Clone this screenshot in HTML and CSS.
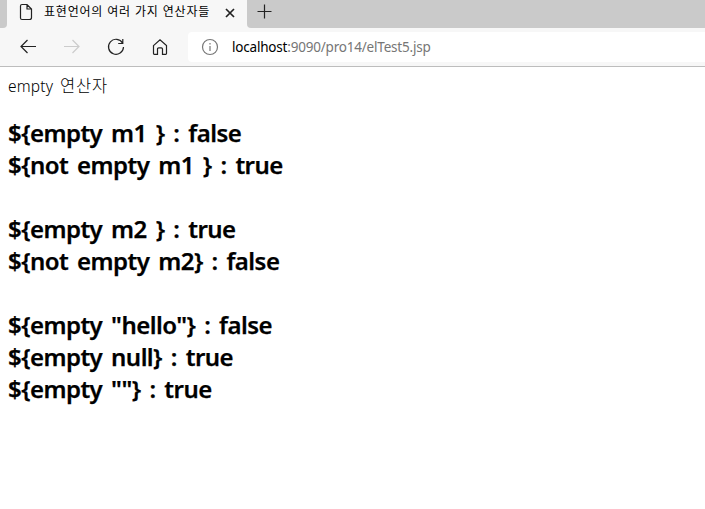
FILE: index.html
```html
<!DOCTYPE html>
<html lang="ko">
<head>
<meta charset="utf-8">
<title>표현언어의 여러 가지 연산자들</title>
<link rel="stylesheet" href="styles.css">
</head>
<body>
<header class="browser">
  <div class="tabs">
    <div class="tab-edge"></div>
    <div class="tab">
      <svg class="file" width="14" height="18" viewBox="0 0 14 18"><path d="M3 1.5H8L12.5 6V14.5Q12.5 16.5 10.5 16.5H3Q1.5 16.5 1.5 15V3Q1.5 1.5 3 1.5ZM8 1.5V6H12.5"/></svg>
      <span class="tab-title">표현언어의 여러 가지 연산자들</span>
      <svg class="close" width="10" height="10" viewBox="0 0 10 10"><path d="M1 1L9 9M9 1L1 9"/></svg>
    </div>
    <div class="tab-rest"><svg width="15" height="15" viewBox="0 0 15 15"><path d="M7.5 .5V14.5M.5 7.5H14.5"/></svg></div>
  </div>
  <nav class="toolbar">
    <svg width="18" height="18" viewBox="0 0 18 18"><path d="M17 8.5H2M8.5 2L2 8.5L8.5 15"/></svg>
    <svg class="disabled" width="18" height="18" viewBox="0 0 18 18"><path d="M1 8.5H16M9.5 2L16 8.5L9.5 15"/></svg>
    <svg width="18" height="18" viewBox="0 0 18 18"><path d="M15.6 5.2A7.5 7.5 0 1 0 16.5 9M15.8 1V5.5H11.2"/></svg>
    <svg width="18" height="18" viewBox="0 0 18 18"><path d="M2.5 7.6L9 1.8L15.5 7.6V15.5Q15.5 16.3 14.7 16.3H11.5V11Q11.5 9.8 10.3 9.8H7.7Q6.5 9.8 6.5 11V16.3H3.3Q2.5 16.3 2.5 15.5Z"/></svg>
    <div class="address">
      <svg class="info" width="18" height="18" viewBox="0 0 18 18"><circle cx="9" cy="9" r="7.5"/><path d="M9 8V13M9 5V6.5"/></svg>
      <span class="url"><b>localhost</b>:9090/pro14/elTest5.jsp</span>
    </div>
  </nav>
</header>
<main>
<p>empty <span class="ko">연산자</span></p>
<h2>${empty m1 } : false<br>
${not empty m1 } : true<br>
<br>
${empty m2 } : true<br>
${not empty m2} : false<br>
<br>
${empty "hello"} : false<br>
${empty null} : true<br>
${empty ""} : true</h2>
</main>
</body>
</html>
```
FILE: styles.css
```css
* { box-sizing: border-box; }
body { margin: 0; background: #fff; color: #000; font-family: "Noto Sans", "Noto Sans CJK KR", sans-serif; overflow: hidden; }
svg { display: block; flex: none; fill: none; stroke: #222; stroke-width: 1.2; }
.browser { height: 67px; background: #f7f7f7; border-bottom: 1px solid #bdbdbd; }
.tabs { display: flex; height: 28px; }
.tab-edge { width: 7px; background: #cacaca; border-radius: 0 0 4px 0; }
.tab { width: 240px; display: flex; align-items: flex-start; }
.file { margin: 3px 0 0 12px; }
.tab-title { width: 168px; margin-left: 11px; font: 12px/16px "Noto Sans CJK KR", sans-serif; letter-spacing: .78px; margin-top: 3px; white-space: nowrap; }
.close { margin: 8px 0 0 13px; stroke-width: 1.7; }
.tab-rest { flex: 1; background: #cacaca; border-radius: 0 0 0 4px; padding: 4px 0 0 10px; }
.toolbar { display: flex; align-items: center; height: 38px; padding-left: 19px; gap: 26px; }
.disabled { stroke: #ccc; }
.address { flex: 1; display: flex; align-items: center; height: 30px; margin-left: -7px; padding-left: 13px; gap: 13px; background: #fff; border-radius: 4px 0 0 4px; }
.info { stroke: #777; }
.url { color: #767676; font-size: 13.5px; letter-spacing: -.2px; line-height: 20px; white-space: nowrap; }
.url b { color: #000; font-weight: 400; }
main { padding: 7px 8px; }
p { margin: 0; height: 24px; font-size: 15.5px; line-height: 24px; font-weight: 300; letter-spacing: .2px; word-spacing: 2.5px; }
.ko { font-size: 16.5px; letter-spacing: .8px; }
h2 { margin: 19px 0 0; font-size: 24px; line-height: 32px; font-weight: 600; letter-spacing: -.55px; word-spacing: 3.2px; white-space: nowrap; -webkit-text-stroke: .25px #000; }
```
